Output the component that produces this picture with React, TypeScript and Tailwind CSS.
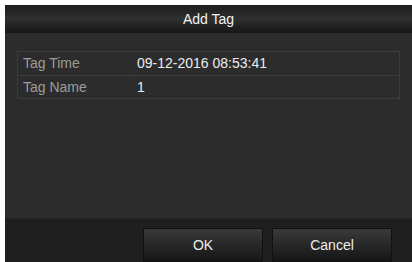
import React from 'react';

const rows = [
  { label: 'Tag Time', value: '09-12-2016 08:53:41' },
  { label: 'Tag Name', value: '1' },
];

export default function App() {
  return (
    <div className="w-[412px] h-[262px] bg-white pl-[5px] pt-[5px] overflow-hidden" style={{ fontFamily: '"Liberation Sans", Arial, sans-serif' }}>
      <div className="w-full h-full flex flex-col bg-[#2c2c2c]">
        {/* title bar */}
        <div className="h-[28px] flex items-center justify-center bg-gradient-to-b from-[#1c1c1c] via-[#303030] to-[#161616] text-[14px] text-[#f2f2f2]">
          Add Tag
        </div>

        {/* fields */}
        <div className="flex-1 px-[12px] pt-[18px]">
          <div className="border border-[#3d3d3d]">
            {rows.map((row, i) => (
              <div key={row.label} className={`flex h-[23px] items-center text-[14px] ${i > 0 ? 'border-t border-[#3d3d3d]' : ''}`}>
                <div className="w-[113px] pl-[5px] text-[#9c9c9c] border-r border-[#303030] h-full flex items-center">{row.label}</div>
                <div className="pl-[6px] text-[#ececec]">{row.value}</div>
              </div>
            ))}
          </div>
        </div>

        {/* footer */}
        <div className="h-[44px] bg-[#1f1f1f] border-t border-[#262626] flex items-end justify-end gap-[9px] pr-[20px]">
          <button className="w-[120px] h-[34px] bg-gradient-to-b from-[#3a3a3a] to-[#161616] border border-[#111] text-[14px] text-[#eeeeee] flex items-center justify-center">
            OK
          </button>
          <button className="w-[120px] h-[34px] bg-gradient-to-b from-[#3a3a3a] to-[#161616] border border-[#111] text-[14px] text-[#eeeeee] flex items-center justify-center">
            Cancel
          </button>
        </div>
      </div>
    </div>
  );
}
